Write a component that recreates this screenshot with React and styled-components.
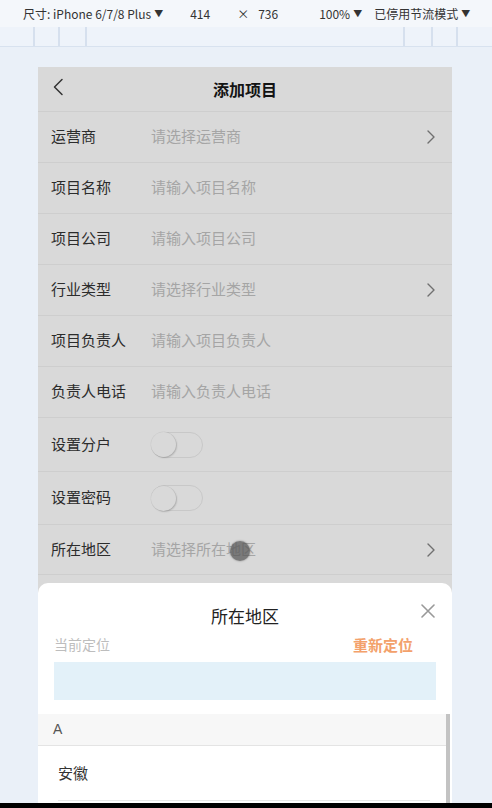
import React from "react";
import styled, { createGlobalStyle } from "styled-components";

const Global = createGlobalStyle`
  html, body { margin: 0; padding: 0; }
  body {
    width: 492px; height: 808px; overflow: hidden;
    background: #eaf0f8;
    font-family: "Noto Sans CJK SC", "Noto Sans", sans-serif;
  }
`;

const Page = styled.div`
  width: 492px; height: 808px;
  display: flex; flex-direction: column;
  background: #eaf0f8;
  position: relative;
`;

const Toolbar = styled.div`
  height: 27px;
  background: #f4f7fb;
  display: flex; align-items: center;
  padding-left: 23px;
  font-size: 12px; color: #333;
  box-sizing: border-box;
`;

const ToolText = styled.span`
  margin-left: ${p => p.$ml || 0}px;
  white-space: nowrap;
  display: inline-flex; align-items: center;
`;

const Caret = styled.span`
  font-size: 9px; margin-left: 3px;
`;

const Ruler = styled.div`
  height: 19px;
  border-bottom: 1px solid #d8e2ef;
  background: #eef3fa;
  display: flex;
`;

const RulerCell = styled.div`
  width: ${p => p.$w}px;
  border-right: ${p => (p.$line ? "2px solid #d6e0ee" : "none")};
  flex: ${p => (p.$grow ? 1 : "none")};
`;

const Stage = styled.div`
  flex: 1;
  display: flex; flex-direction: column; align-items: flex-start;
  padding: 20px 0 0 38px;
`;

const Device = styled.div`
  width: 414px; height: 736px;
  background: #d9d9d9;
  display: flex; flex-direction: column;
  overflow: hidden;
  position: relative;
`;

const Header = styled.div`
  height: 45px; box-sizing: border-box;
  border-bottom: 1px solid #cecece;
  display: flex; align-items: center; justify-content: center;
  position: relative;
`;

const BackBtn = styled.div`
  position: absolute; left: 12px; top: 10px;
  width: 16px; height: 20px;
  display: flex; align-items: center; justify-content: center;
`;

const Title = styled.div`
  font-size: 16px; font-weight: 700; color: #141414;
  padding-bottom: 1px;
`;

const Row = styled.div`
  height: ${p => p.$h || 51}px; box-sizing: border-box;
  border-bottom: 1px solid #cecece;
  display: flex; align-items: center;
  padding: 0 16px 3px 13px;
`;

const Label = styled.div`
  width: 100px; flex: none;
  font-size: 15px; color: #2c2c2c;
`;

const Placeholder = styled.div`
  flex: 1;
  font-size: 15px; color: #a5a5a5;
`;

const ArrowBox = styled.div`
  display: flex; align-items: center; padding-top: 3px;
`;

const Toggle = styled.div`
  width: 52px; height: 26px; box-sizing: border-box;
  border: 1px solid #c8c8c8; border-radius: 13px;
  display: flex; align-items: center;
  margin-top: 3px;
`;

const Knob = styled.div`
  width: 25px; height: 25px; border-radius: 50%;
  margin-left: -1px;
  background: #d9d9d9;
  box-shadow: 1px 1px 1.5px rgba(0,0,0,0.16), 0 0 0 0.5px rgba(0,0,0,0.06);
`;

const Spacer = styled.div` flex: 1; `;

const Popup = styled.div`
  height: 220px; flex: none;
  background: #fff;
  border-radius: 10px 10px 0 0;
  display: flex; flex-direction: column;
`;

const PopHead = styled.div`
  height: 49px;
  display: flex; align-items: flex-end; justify-content: center;
  position: relative;
`;

const PopTitle = styled.div`
  font-size: 17px; color: #222; padding-bottom: 4px;
`;

const CloseBtn = styled.div`
  position: absolute; right: 17px; top: 16px;
  width: 14px; height: 14px;
`;

const LocRow = styled.div`
  display: flex; align-items: center; justify-content: space-between;
  padding: 0 39px 0 16px;
  height: 24px;
`;

const LocLabel = styled.div`
  font-size: 14px; color: #bdbdbd;
`;

const Relocate = styled.div`
  font-size: 15px; font-weight: 700; color: #f3a16b;
`;

const LocBox = styled.div`
  margin: 6px 16px 0 16px;
  height: 38px; background: #e3f1f9;
`;

const ListArea = styled.div`
  margin-top: 14px; flex: 1;
  display: flex; min-height: 0;
`;

const ListContent = styled.div`
  flex: 1; display: flex; flex-direction: column;
`;

const SectionHead = styled.div`
  height: 32px; box-sizing: border-box;
  background: #f7f7f7;
  border-bottom: 1px solid #e4e4e4;
  display: flex; align-items: center;
  padding: 0 0 2px 15px;
  font-size: 14px; color: #555;
  font-family: "Liberation Sans", "Noto Sans CJK SC", sans-serif;
`;

const Item = styled.div`
  height: 55px; box-sizing: border-box;
  margin: 0 16px 0 20px;
  border-bottom: 1px solid #e8e8e8;
  display: flex; align-items: center;
  padding-bottom: 2px;
  font-size: 15px; color: #333;
`;

const ScrollThumb = styled.div`
  width: 4px; background: #c3c3c3;
  margin-right: 2px;
`;

const BottomBar = styled.div`
  position: absolute; left: 0; right: 0; bottom: 0; height: 5px;
  background: #000;
`;

const TouchCursor = styled.div`
  position: absolute; left: 192px; top: 474px;
  width: 20px; height: 20px; border-radius: 50%;
  background: rgba(90,90,90,0.75);
  box-shadow: 0 0 2px rgba(60,60,60,0.6);
`;

const Chevron = () => (
  <ArrowBox>
    <svg width="10" height="16" viewBox="0 0 10 16">
      <path d="M2 2 L8 8 L2 14" fill="none" stroke="#707070" strokeWidth="1.4" strokeLinecap="round" strokeLinejoin="round" />
    </svg>
  </ArrowBox>
);

const rows = [
  { label: "运营商", ph: "请选择运营商", arrow: true },
  { label: "项目名称", ph: "请输入项目名称" },
  { label: "项目公司", ph: "请输入项目公司" },
  { label: "行业类型", ph: "请选择行业类型", arrow: true },
  { label: "项目负责人", ph: "请输入项目负责人" },
  { label: "负责人电话", ph: "请输入负责人电话" },
];

export default function App() {
  return (
    <Page>
      <Global />
      <Toolbar>
        <ToolText>尺寸: iPhone 6/7/8 Plus<Caret>▼</Caret></ToolText>
        <ToolText $ml={27}>414</ToolText>
        <ToolText $ml={27}>×</ToolText>
        <ToolText $ml={9}>736</ToolText>
        <ToolText $ml={41}>100%<Caret>▼</Caret></ToolText>
        <ToolText $ml={12}>已停用节流模式<Caret>▼</Caret></ToolText>
      </Toolbar>
      <Ruler>
        <RulerCell $w={33} $line />
        <RulerCell $w={23} $line />
        <RulerCell $w={25} $line />
        <RulerCell $grow $line />
        <RulerCell $w={26} $line />
        <RulerCell $w={23} $line />
        <RulerCell $w={34} />
      </Ruler>
      <Stage>
        <Device>
          <Header>
            <BackBtn>
              <svg width="12" height="18" viewBox="0 0 12 18">
                <path d="M10 1.5 L2.5 9 L10 16.5" fill="none" stroke="#333" strokeWidth="1.5" strokeLinecap="round" strokeLinejoin="round" />
              </svg>
            </BackBtn>
            <Title>添加项目</Title>
          </Header>
          {rows.map(r => (
            <Row key={r.label}>
              <Label>{r.label}</Label>
              <Placeholder>{r.ph}</Placeholder>
              {r.arrow && <Chevron />}
            </Row>
          ))}
          <Row $h={54}>
            <Label>设置分户</Label>
            <Toggle><Knob /></Toggle>
          </Row>
          <Row $h={53}>
            <Label>设置密码</Label>
            <Toggle><Knob /></Toggle>
          </Row>
          <Row $h={50}>
            <Label>所在地区</Label>
            <Placeholder>请选择所在地区</Placeholder>
            <Chevron />
          </Row>
          <Spacer />
          <Popup>
            <PopHead>
              <PopTitle>所在地区</PopTitle>
              <CloseBtn>
                <svg width="14" height="14" viewBox="0 0 14 14">
                  <path d="M1 1 L13 13 M13 1 L1 13" stroke="#999" strokeWidth="1.6" strokeLinecap="round" />
                </svg>
              </CloseBtn>
            </PopHead>
            <LocRow>
              <LocLabel>当前定位</LocLabel>
              <Relocate>重新定位</Relocate>
            </LocRow>
            <LocBox />
            <ListArea>
              <ListContent>
                <SectionHead>A</SectionHead>
                <Item>安徽</Item>
              </ListContent>
              <ScrollThumb />
            </ListArea>
          </Popup>
          <TouchCursor />
        </Device>
      </Stage>
      <BottomBar />
    </Page>
  );
}
